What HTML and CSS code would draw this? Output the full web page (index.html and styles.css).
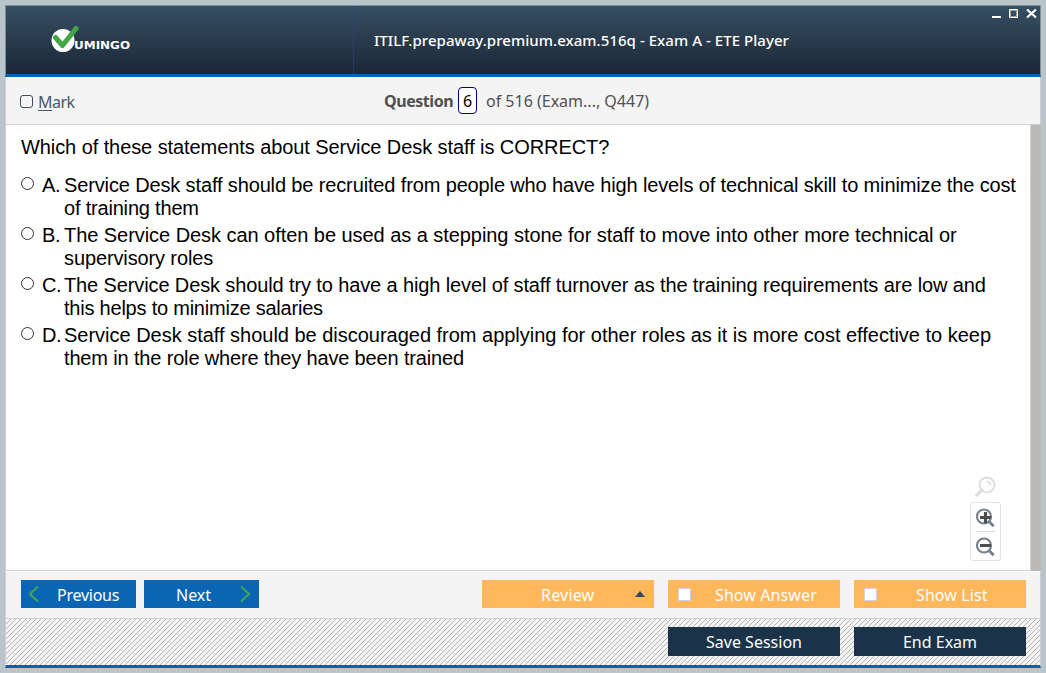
FILE: index.html
```html
<!DOCTYPE html>
<html lang="en">
<head>
<meta charset="utf-8">
<title>ETE Player</title>
<link rel="stylesheet" href="styles.css">
</head>
<body>
<div class="window">
  <header class="titlebar">
    <svg class="logo" width="82" height="30" viewBox="0 0 82 30">
      <circle cx="12" cy="14.5" r="11.5" fill="#fff"/>
      <path d="M4.5 11.5 L11.5 19.5 L25 2.5" fill="none" stroke="#43a546" stroke-width="5" stroke-linecap="round" stroke-linejoin="round"/>
      <text class="logo-text" x="0" y="0" transform="translate(23 23) scale(1.22 1)" textLength="46" lengthAdjust="spacingAndGlyphs">UMINGO</text>
    </svg>
    <h1 class="title"><span class="t-title">ITILF.prepaway.premium.exam.516q - Exam A - ETE Player</span></h1>
    <svg class="controls" width="46" height="12" viewBox="0 0 46 12">
      <path d="M0 8h9" stroke="#fff" stroke-width="2"/>
      <path d="M17.5 .5h8v8h-8z" fill="none" stroke="#fff"/>
      <path d="M18.5 1.5h6v6h-6z" fill="none" stroke="#a9a496"/>
      <path d="M35 .5l9 8M44 .5l-9 8" stroke="#fff" stroke-width="2.2"/>
    </svg>
  </header>
  <div class="infobar">
    <label class="mark"><i class="mark-box"></i><span class="t-mark"><u>M</u>ark</span></label>
    <div class="counter"><b class="t-question">Question</b><span class="number">6</span><span class="t-of">of 516 (Exam..., Q447)</span></div>
  </div>
  <main class="content">
    <section class="page">
      <p class="question"><span>Which of these statements about Service Desk staff is CORRECT?</span></p>
      <div class="answer"><i class="radio"></i><span class="letter">A.</span><p><span class="fit-a1">Service Desk staff should be recruited from people who have high levels of technical skill to minimize the cost</span><br><span class="fit-a2">of training them</span></p></div>
      <div class="answer"><i class="radio"></i><span class="letter">B.</span><p><span class="fit-b1">The Service Desk can often be used as a stepping stone for staff to move into other more technical or</span><br><span class="fit-b2">supervisory roles</span></p></div>
      <div class="answer"><i class="radio"></i><span class="letter">C.</span><p><span class="fit-c1">The Service Desk should try to have a high level of staff turnover as the training requirements are low and</span><br><span class="fit-c2">this helps to minimize salaries</span></p></div>
      <div class="answer"><i class="radio"></i><span class="letter">D.</span><p><span class="fit-d1">Service Desk staff should be discouraged from applying for other roles as it is more cost effective to keep</span><br><span class="fit-d2">them in the role where they have been trained</span></p></div>
      <div class="zoom">
        <svg width="22" height="22" viewBox="0 0 22 22" fill="none" stroke="#dedede">
          <circle cx="13" cy="9" r="7.5" stroke-width="2"/>
          <path d="M12.5 5.4a4 4 0 0 1 4 4" stroke-width="1.5"/>
          <path d="M8 14L2.8 19" stroke-width="3.2" stroke-linecap="round"/>
        </svg>
        <div class="zoom-panel">
          <svg width="20" height="20" viewBox="0 0 20 20" fill="none" stroke="#75838f">
            <circle cx="8" cy="8.5" r="7" stroke-width="2.2"/>
            <path d="M13 13.5L17.7 18.2" stroke-width="3"/>
            <path d="M4 9.5h11M9.5 4v11" stroke="#4d4d4d" stroke-width="3.2"/>
          </svg>
          <hr>
          <svg width="20" height="20" viewBox="0 0 20 20" fill="none" stroke="#75838f">
            <circle cx="8" cy="8.5" r="7" stroke-width="2.2"/>
            <path d="M13 13.5L17.7 18.2" stroke-width="3"/>
            <path d="M4 8.5h11" stroke="#4d4d4d" stroke-width="3"/>
          </svg>
        </div>
      </div>
    </section>
    <div class="scrollbar"></div>
  </main>
  <nav class="toolbar">
    <button class="btn blue prev"><svg width="12" height="18" viewBox="0 0 12 18"><path d="M10 1.5L2 9l8 7.5"/></svg><span>Previous</span></button>
    <button class="btn blue next"><span>Next</span><svg width="12" height="18" viewBox="0 0 12 18"><path d="M2 1.5L10 9l-8 7.5"/></svg></button>
    <button class="btn orange review"><span>Review</span><i class="arrow"></i></button>
    <button class="btn orange answer-toggle"><i class="check"></i><span>Show Answer</span></button>
    <button class="btn orange list-toggle"><i class="check"></i><span>Show List</span></button>
  </nav>
  <footer class="footer">
    <svg class="hatch" width="100%" height="100%"><defs><pattern id="hatch" width="5" height="5" patternUnits="userSpaceOnUse"><path fill="#b4b4b4" shape-rendering="crispEdges" d="M4 0h1v1h-1zM3 1h1v1h-1zM2 2h1v1h-1zM1 3h1v1h-1zM0 4h1v1h-1z"/></pattern></defs><rect width="100%" height="100%" fill="url(#hatch)"/></svg>
    <button class="btn dark">Save Session</button>
    <button class="btn dark">End Exam</button>
  </footer>
</div>
</body>
</html>
```
FILE: styles.css
```css
* { box-sizing: border-box; }
body { margin: 0; width: 1046px; height: 673px; padding: 5px; background: #b9c5cb; overflow: hidden; font-family: "Noto Sans", sans-serif; }
p, h1 { margin: 0; }
i { display: block; flex: none; }
svg { display: block; flex: none; }
.window { width: 1036px; height: 663px; display: flex; flex-direction: column; background: #f4f4f4; }
.titlebar { height: 72px; flex: none; display: grid; grid-template-columns: 347px 1fr 50px; border: 1px solid #7f8f96; border-bottom: 3px solid #0662b2; background: linear-gradient(#364f64, #1b2735); }
.logo { margin: 20px 0 0 45px; }
.logo-text { font: bold 9.8px "DejaVu Sans", sans-serif; fill: #fff; }
.title { padding: 23px 0 0 20px; border-left: 1px dotted #30409a; font-size: 15px; line-height: 22px; font-weight: 500; letter-spacing: 0.05px; color: #fff; white-space: nowrap; }
.controls { margin: 3px 0 0 2px; }
.infobar { height: 48px; flex: none; display: grid; grid-template-columns: 363px 1fr; border: 1px solid #cfcfcf; border-top: 0; background: #f4f4f4; color: #515151; font-size: 16px; line-height: 22px; white-space: nowrap; }
.mark { display: flex; gap: 5px; padding: 14px 0 0 14px; color: #47586a; letter-spacing: -0.5px; }
.mark u { text-underline-offset: 2px; text-decoration-thickness: 1px; }
.mark-box { width: 13px; height: 13px; margin-top: 4px; border: 1px solid #3a5064; border-radius: 3px; }
.counter { display: flex; padding: 10px 0 0 15px; line-height: 28px; }
.counter b { width: 69px; letter-spacing: -0.45px; }
.number { width: 19px; height: 27px; margin: 0 9px 0 5px; border: 1px solid #000080; border-radius: 4px; background: #fff; color: #000; text-align: center; line-height: 27px; }
.content { height: 446px; flex: none; display: flex; background: #fff; border-left: 1px solid #cfcfcf; }
.page { flex: 1; min-width: 0; position: relative; padding: 11px 0 0 15px; border-right: 1px solid #cfcfcf; border-bottom: 1px solid #cfcfcf; font: 20px/23px "Liberation Sans", Arial, sans-serif; color: #000; white-space: nowrap; }
.question { margin-bottom: 15px; letter-spacing: -0.08px; }
.answer { display: flex; height: 46px; margin-bottom: 4px; }
.fit-a1 { letter-spacing: -0.135px; }
.fit-a2 { letter-spacing: -0.19px; }
.fit-b1 { letter-spacing: -0.052px; }
.fit-b2 { letter-spacing: -0.12px; }
.fit-c1 { letter-spacing: -0.12px; }
.fit-c2 { letter-spacing: -0.22px; }
.fit-d1 { letter-spacing: -0.015px; }
.fit-d2 { letter-spacing: -0.155px; }
.radio { width: 13px; height: 13px; margin: 3px 8px 0 0; border: 1px solid #333; border-radius: 50%; }
.letter { width: 22px; letter-spacing: -0.4px; }
.scrollbar { width: 10px; background: #bab9b5; }
.zoom { position: absolute; left: 964px; top: 351px; }
.zoom > svg { margin-left: 4px; }
.zoom-panel { width: 31px; height: 59px; margin-top: 4px; padding: 5px 5px; border: 1px solid #e2e2e2; border-radius: 3px; background: #fff; }
.zoom-panel hr { width: 19px; height: 1px; margin: 3px 0 5px; border: 0; background: #dcdcdc; }
.toolbar { height: 48px; flex: none; display: flex; padding: 8px 14px 0 15px; border: 1px solid #cfcfcf; border-top: 1px solid #fff; background: #f4f4f4; }
.btn { display: flex; align-items: center; height: 28px; border: 0; padding: 0; color: #fff; font: 16px/22px "Noto Sans", sans-serif; white-space: nowrap; }
.toolbar .btn span { padding-top: 2px; }
.blue { width: 115px; background: #0a66b5; }
.blue path { fill: none; stroke: #43a552; stroke-width: 2.2; }
.prev { padding-left: 7px; gap: 17px; margin-right: 8px; letter-spacing: -0.25px; }
.next { padding-left: 32px; gap: 28px; }
.orange { width: 172px; background: #ffb75c; }
.review { margin-left: auto; padding-left: 59px; letter-spacing: 0.2px; }
.arrow { margin-left: auto; margin-right: 9px; border: 5px solid transparent; border-top: 0; border-bottom: 6px solid #30495e; }
.check { width: 13px; height: 13px; border: 1px solid #cfd2d8; background: #fff; }
.answer-toggle, .list-toggle { margin-left: 14px; padding-left: 10px; gap: 24px; letter-spacing: 0.1px; }
.list-toggle { gap: 39px; }
.footer { position: relative; height: 49px; flex: none; display: flex; justify-content: flex-end; gap: 14px; padding: 8px 14px 0 0; border: 1px solid #cfcfcf; border-top: 0; border-bottom: 3px solid #0662b2; background: #f4f4f4; }
.hatch { position: absolute; inset: 0; }
.dark { position: relative; width: 172px; height: 29px; justify-content: center; background: #1a3348; }
```
